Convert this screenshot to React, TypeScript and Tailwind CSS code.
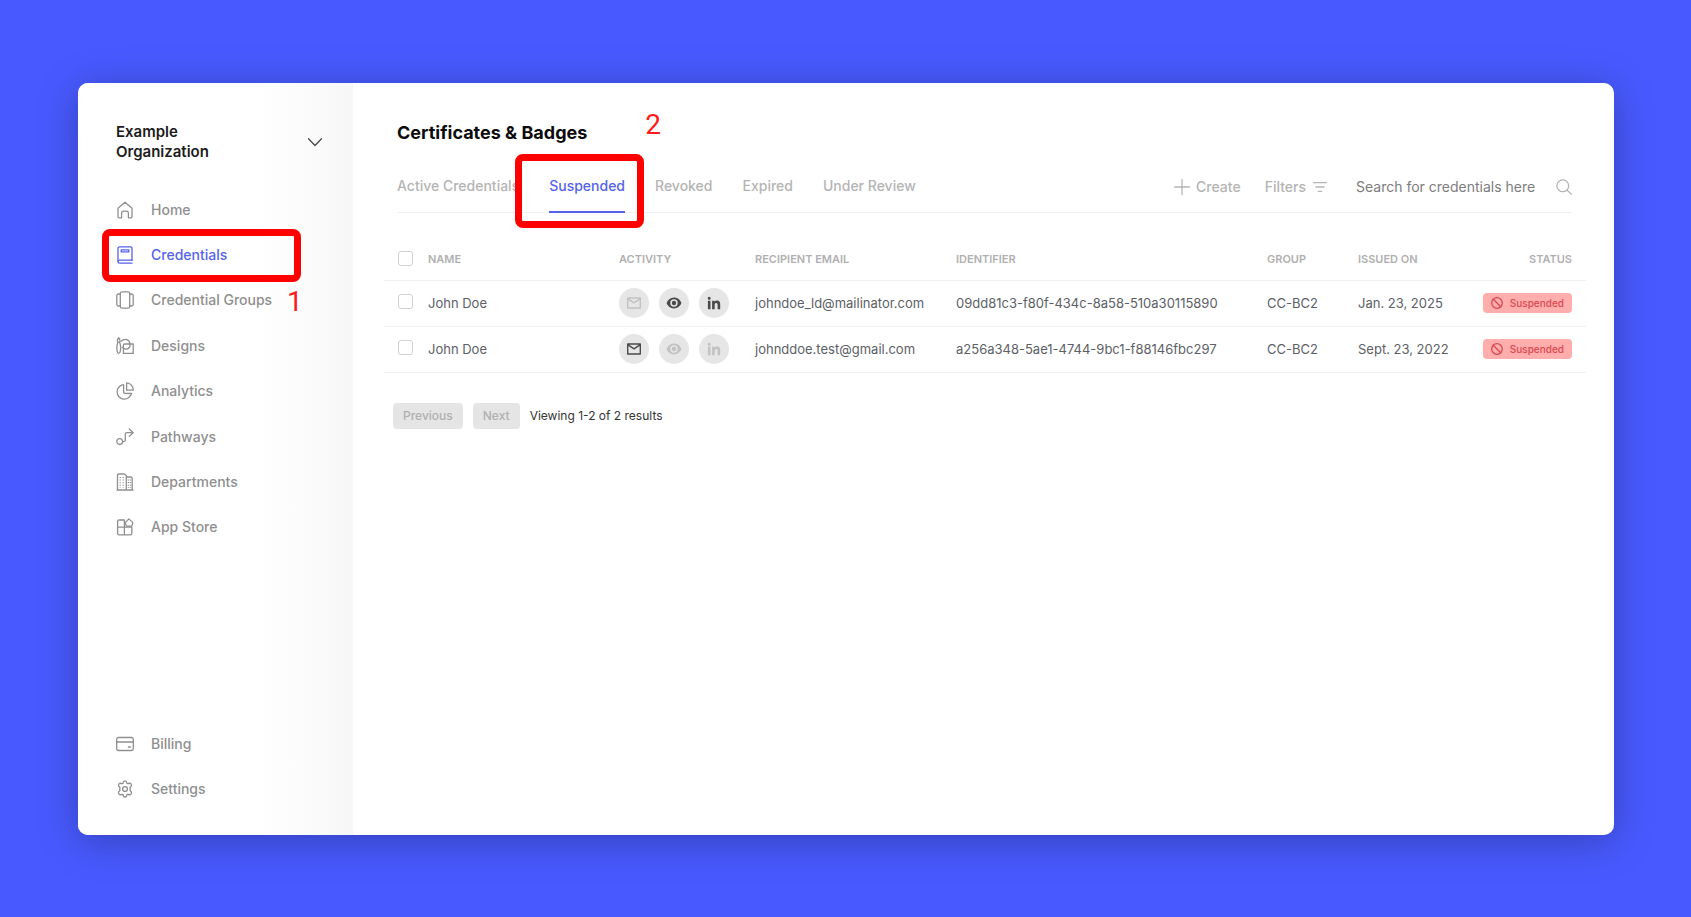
import React, { ReactNode, useState } from 'react';
import clsx from 'clsx';

function Svg({ className, children, box = 18 }: { className?: string; children: ReactNode; box?: number }) {
  return (
    <svg
      viewBox={`0 0 ${box} ${box}`}
      className={clsx('shrink-0', className)}
      fill="none"
      stroke="currentColor"
      strokeWidth="1.3"
      strokeLinecap="round"
      strokeLinejoin="round"
      aria-hidden="true"
    >
      {children}
    </svg>
  );
}

const HomeIcon = () => (
  <Svg className="size-[18px]">
    <path d="M2 7.2 9 1.2l7 6v8.6a1 1 0 0 1-1 1h-2.6v-4.6a2 2 0 0 0-2-2H7.6a2 2 0 0 0-2 2v4.6H3a1 1 0 0 1-1-1z" />
  </Svg>
);

const CredentialsIcon = () => (
  <Svg className="size-[18px]">
    <path d="M16 14.2V2A1.200 1.200 0 0 0 14.800.8H3.800A1.800 1.800 0 0 0 2 2.600v12.800a1.800 1.800 0 0 0 1.800 1.800H16" />
    <path d="M2 15.400a1.500 1.500 0 0 1 1.600-1.200H16" />
    <path d="M5.200 3.900h7.600v2H5.200z" />
  </Svg>
);

const GroupsIcon = () => (
  <Svg className="size-[18px]">
    <rect x="4.300" y=".8" width="9.400" height="16.400" rx="1.800" />
    <path d="M4.300 3H2.600A1.800 1.800 0 0 0 .8 4.800v8.400A1.800 1.800 0 0 0 2.600 15h1.700M13.700 3h1.700a1.800 1.800 0 0 1 1.800 1.800v8.400a1.800 1.800 0 0 1-1.800 1.800h-1.700" />
  </Svg>
);

const DesignsIcon = () => (
  <Svg className="size-[18px]">
    <path d="M2.700.8c1.300 1.300 1.600 2.800 1 4.600H1.800C1.100 3.600 1.400 2.100 2.700.8zM1.800 5.400c-1.200 3-1.200 5.600-.6 8.800.4 3 2.700 3 3.100 0 .6-3.200.5-5.800-.6-8.800" />
    <path d="M5.400 4.200A4.900 4.900 0 0 1 14 7M6.200 10.200a5 5 0 0 0 6.300 1.200A4.800 4.800 0 0 0 14 7" />
    <path d="M8.600 7h8.600v9.400H7.400V8.200A1.200 1.200 0 0 1 8.600 7z" />
  </Svg>
);

const AnalyticsIcon = () => (
  <Svg className="size-[18px]">
    <path d="M7.600 2.600a7.300 7.300 0 1 0 7.900 8.900l-6.700-.1a1.200 1.200 0 0 1-1.200-1.200z" />
    <path d="M10.600.8v7.400h6.600A7 7 0 0 0 10.600.8z" />
  </Svg>
);

const PathwaysIcon = () => (
  <Svg className="size-[18px]">
    <circle cx="3.700" cy="13.600" r="2.900" />
    <path d="M6.600 13.600h1.200a1.500 1.500 0 0 0 1.500-1.500V6.500A1.800 1.800 0 0 1 11.100 4.700h6M13.300 1l3.900 3.700-3.900 3.700" />
  </Svg>
);

const DepartmentsIcon = () => (
  <Svg className="size-[18px]">
    <path d="M1.500 17V2.200A1.200 1.200 0 0 1 2.700 1h5.600l2 1.500V17zM10.300 4h4.400a1.500 1.500 0 0 1 1.500 1.500V17h-5.900M1 17h16" />
    <path strokeDasharray="1 1.600" strokeLinecap="butt" d="M4.200 4v11M7.200 4v11M12.400 6.500V15M14.400 6.500V15" />
  </Svg>
);

const AppStoreIcon = () => (
  <Svg className="size-[18px]">
    <path d="M8.400 2H2.900A1.300 1.300 0 0 0 1.600 3.300v5.900h6.800zM1.600 9.200v6.300a1.300 1.300 0 0 0 1.300 1.300h5.500V9.200zM8.400 9.200h7.400v6.300a1.300 1.300 0 0 1-1.300 1.300H8.400z" />
    <path d="m12.900.9 3.900 3.700-1 3.600h-5.300L9.200 4.600z" />
  </Svg>
);

const BillingIcon = () => (
  <Svg className="size-[18px]">
    <rect x=".7" y="2.500" width="16.600" height="13" rx="1.800" />
    <path d="M.7 7h16.600M12.400 12h2" />
  </Svg>
);

const SettingsIcon = () => (
  <Svg className="size-[18px]" box={24}>
    <path
      strokeWidth="1.800"
      d="M9.600 3.900c.2-1.200.6-2.500 1.500-2.500h1.800c.9 0 1.300 1.300 1.500 2.500.1.600.8 1 1.500 1 1.400-.3 2.900-1 3.600-.2l1.200 2c.5.900-.7 2-1.600 2.900-.5.500-.5 1.200-.2 1.600.1.500.1 1.100 0 1.600-.3.400-.3 1.100.2 1.600.9.900 2.100 2 1.600 2.900l-1.200 2c-.7.800-2.200.1-3.600-.2-.7 0-1.400.4-1.500 1-.2 1.200-.6 2.500-1.500 2.500h-1.800c-.9 0-1.300-1.300-1.500-2.500-.1-.6-.8-1-1.500-1-1.400.3-2.900 1-3.600.2l-1.200-2c-.5-.9.7-2 1.600-2.900.5-.5.5-1.200.2-1.600-.1-.5-.1-1.100 0-1.600.3-.4.300-1.100-.2-1.600-.9-.9-2.100-2-1.600-2.900l1.200-2c.7-.8 2.200-.1 3.600.2.700 0 1.400-.4 1.500-1z"
    />
    <circle strokeWidth="1.800" cx="12" cy="12" r="3.200" />
  </Svg>
);

const MailIcon = () => (
  <Svg className="size-4" box={16}>
    <path strokeWidth="1.400" d="M1.700 3h12.600v10H1.700zM1.700 3.600 8 7.800l6.300-4.200" />
  </Svg>
);

const EyeIcon = () => (
  <Svg className="size-4" box={16}>
    <path
      fill="currentColor"
      stroke="none"
      fillRule="evenodd"
      d="M8 2.600c-3.400 0-6.200 2.200-7.400 5.400 1.200 3.200 4 5.400 7.400 5.400s6.200-2.200 7.400-5.400C14.200 4.800 11.400 2.600 8 2.600zm0 9.100a3.700 3.700 0 1 1 0-7.400 3.700 3.700 0 0 1 0 7.400zm0-1.500a2.200 2.200 0 1 0 0-4.400 2.200 2.200 0 0 0 0 4.400z"
    />
  </Svg>
);

const LinkedinIcon = () => (
  <Svg className="size-4" box={16}>
    <path
      fill="currentColor"
      stroke="none"
      d="M1.900 5.800h2.600v8.400H1.900zM3.200 1.800a1.500 1.500 0 1 1 0 3 1.500 1.500 0 0 1 0-3zM6.100 5.800h2.500V7c.4-.8 1.300-1.400 2.500-1.400 2.600 0 3.100 1.700 3.100 4v4.600h-2.600v-4.100c0-1 0-2.200-1.400-2.200s-1.500 1-1.500 2.100v4.200H6.100z"
    />
  </Svg>
);

const BanIcon = () => (
  <Svg className="size-3" box={12}>
    <circle cx="6" cy="6" r="5.300" />
    <path d="m2.300 2.300 7.400 7.400" />
  </Svg>
);

const NAV: { label: string; icon: () => ReactNode }[] = [
  { label: 'Home', icon: HomeIcon },
  { label: 'Credentials', icon: CredentialsIcon },
  { label: 'Credential Groups', icon: GroupsIcon },
  { label: 'Designs', icon: DesignsIcon },
  { label: 'Analytics', icon: AnalyticsIcon },
  { label: 'Pathways', icon: PathwaysIcon },
  { label: 'Departments', icon: DepartmentsIcon },
  { label: 'App Store', icon: AppStoreIcon },
];

const FOOTER_NAV = [
  { label: 'Billing', icon: BillingIcon },
  { label: 'Settings', icon: SettingsIcon },
];

const TABS = ['Active Credentials', 'Suspended', 'Revoked', 'Expired', 'Under Review'];

const ROWS = [
  {
    name: 'John Doe',
    mailed: false,
    viewed: true,
    shared: true,
    email: 'johndoe_ld@mailinator.com',
    identifier: '09dd81c3-f80f-434c-8a58-510a30115890',
    group: 'CC-BC2',
    issued: 'Jan. 23, 2025',
  },
  {
    name: 'John Doe',
    mailed: true,
    viewed: false,
    shared: false,
    email: 'johnddoe.test@gmail.com',
    identifier: 'a256a348-5ae1-4744-9bc1-f88146fbc297',
    group: 'CC-BC2',
    issued: 'Sept. 23, 2022',
  },
];

function NavItem({ label, icon: Icon, active }: { label: string; icon: () => ReactNode; active?: boolean }) {
  return (
    <li className="relative flex items-center">
      <a
        href="#"
        className={clsx('flex items-center gap-[17px] text-sm font-medium', active ? 'text-[#5463ea]' : 'text-[#8f8f8f]')}
      >
        <Icon />
        {label}
      </a>
      {active && (
        <>
          <span className="pointer-events-none absolute -left-[14px] -top-[3px] h-[53px] w-[199px] rounded-lg border-[7px] border-[#ff0000]" />
          <span className="absolute left-[171px] top-[54px] font-['Roboto',sans-serif] text-[28px] leading-8 text-[#ff1a1a]">1</span>
        </>
      )}
    </li>
  );
}

function Activity({ label, on, children }: { label: string; on: boolean; children: ReactNode }) {
  return (
    <button
      aria-label={label}
      className={clsx('flex size-[30px] items-center justify-center rounded-full bg-[#e6e6e6]', on ? 'text-[#4a4a4a]' : 'text-[#c2c2c2]')}
    >
      {children}
    </button>
  );
}

function Checkbox({ label, checked, onChange }: { label: string; checked: boolean; onChange: () => void }) {
  return (
    <input
      type="checkbox"
      aria-label={label}
      checked={checked}
      onChange={onChange}
      className="block size-[15px] appearance-none rounded-[3px] border border-[#cfd0d6] bg-white checked:bg-[#5463ea]"
    />
  );
}

export default function App() {
  const [tab, setTab] = useState('Suspended');
  const [selected, setSelected] = useState<number[]>([]);

  const toggle = (i: number) =>
    setSelected(selected.includes(i) ? selected.filter((s) => s !== i) : [...selected, i]);
  const allSelected = selected.length === ROWS.length;

  return (
    <div className="flex min-h-screen bg-[#485aff] pt-[83px] pr-[77px] pb-[82px] pl-[78px] font-['Inter',sans-serif]">
      <div className="flex flex-1 overflow-hidden rounded-[10px] bg-white shadow-[0_6px_40px_rgba(0,0,0,0.28)]">
        <aside className="flex w-[275px] shrink-0 flex-col bg-linear-to-r from-white from-65% to-[#f7f7f7] pt-[39px] pr-[30px] pb-6 pl-[38px]">
          <button className="flex items-center justify-between text-left text-[15px] leading-5 font-semibold text-[#1c1c1c]">
            <span className="w-28">Example Organization</span>
            <Svg className="size-4 text-[#4a4a4a]" box={16}>
              <path d="m1.500 4.800 6.500 6.700 6.500-6.700" />
            </Svg>
          </button>
          <nav className="mt-[25px] flex flex-1 flex-col justify-between">
            <ul className="grid h-[363px] auto-rows-fr">
              {NAV.map((item) => (
                <NavItem key={item.label} {...item} active={item.label === 'Credentials'} />
              ))}
            </ul>
            <ul className="grid h-[90px] auto-rows-fr">
              {FOOTER_NAV.map((item) => (
                <NavItem key={item.label} {...item} />
              ))}
            </ul>
          </nav>
        </aside>

        <main className="min-w-0 flex-1 pt-[38px] pr-7 pl-[31px]">
          <h1 className="pl-[13px] text-lg leading-6 font-bold text-[#0c0c0c]">Certificates &amp; Badges</h1>

          <div className="mr-3.5 ml-[13px] flex h-[68px] items-end justify-between border-b border-[#f0f1f2]">
            <div role="tablist" className="flex gap-[30px]">
              {TABS.map((t) => (
                <div key={t} className="relative -mb-px">
                  <button
                    role="tab"
                    aria-selected={t === tab}
                    onClick={() => setTab(t)}
                    className={clsx(
                      'border-b-2 pb-[15px] text-sm leading-5 font-medium',
                      t === tab ? 'border-[#5463ea] text-[#5463ea]' : 'border-transparent text-[#b4b4b4]'
                    )}
                  >
                    {t}
                  </button>
                  {t === 'Suspended' && (
                    <>
                      <span className="pointer-events-none absolute -top-[19px] -left-[34px] h-[74px] w-[129px] rounded-lg border-[7px] border-[#ff0000]" />
                      <span className="absolute -top-[64px] left-[96px] font-['Roboto',sans-serif] text-[28px] leading-8 text-[#ff1a1a]">2</span>
                    </>
                  )}
                </div>
              ))}
            </div>

            <div className="flex items-center pb-[15px] text-sm leading-5 font-medium text-[#b4b4b4]">
              <button className="flex items-center gap-1.5">
                <Svg className="size-4" box={16}>
                  <path d="M8 .6v14.800M.6 8h14.800" />
                </Svg>
                Create
              </button>
              <button className="ml-6 flex items-center gap-1.5">
                Filters
                <Svg className="size-4" box={16}>
                  <path d="M1.400 3.600h13.200M4 8h8M6.400 12.400h3.200" />
                </Svg>
              </button>
              <label className="ml-7 flex items-center">
                <input
                  type="text"
                  aria-label="Search for credentials"
                  placeholder="Search for credentials here"
                  className="w-[200px] font-normal text-[#333] outline-none placeholder:text-[#7d7d7d]"
                />
                <Svg className="size-4" box={16}>
                  <circle cx="6.800" cy="6.800" r="5.900" />
                  <path d="m11.200 11.200 4.200 4.200" />
                </Svg>
              </label>
            </div>
          </div>

          <table className="mt-[25px] w-full table-fixed text-left text-[13px] leading-5 text-[#5c6066]">
            <thead className="text-[11px] text-[#b0b0b0]">
              <tr className="h-[42px] border-b border-[#f0f1f2]">
                <th className="w-11 pl-[14px]">
                  <Checkbox
                    label="Select all"
                    checked={allSelected}
                    onChange={() => setSelected(allSelected ? [] : ROWS.map((_, i) => i))}
                  />
                </th>
                <th className="w-[191px] font-semibold">NAME</th>
                <th className="w-[136px] font-semibold">ACTIVITY</th>
                <th className="w-[201px] font-semibold">RECIPIENT EMAIL</th>
                <th className="font-semibold">IDENTIFIER</th>
                <th className="w-[91px] font-semibold">GROUP</th>
                <th className="w-[118px] font-semibold">ISSUED ON</th>
                <th className="w-[110px] pr-3.5 text-right font-semibold">STATUS</th>
              </tr>
            </thead>
            <tbody>
              {ROWS.map((row, i) => (
                <tr key={row.identifier} className="h-[46px] border-b border-[#f0f1f2]">
                  <td className="pb-[3px] pl-[14px]">
                    <Checkbox label={`Select ${row.name}`} checked={selected.includes(i)} onChange={() => toggle(i)} />
                  </td>
                  <td>{row.name}</td>
                  <td>
                    <div className="flex gap-2.5">
                      <Activity label="Email" on={row.mailed}>
                        <MailIcon />
                      </Activity>
                      <Activity label="Views" on={row.viewed}>
                        <EyeIcon />
                      </Activity>
                      <Activity label="LinkedIn" on={row.shared}>
                        <LinkedinIcon />
                      </Activity>
                    </div>
                  </td>
                  <td>{row.email}</td>
                  <td>{row.identifier}</td>
                  <td>{row.group}</td>
                  <td>{row.issued}</td>
                  <td className="pr-3.5">
                    <span className="ml-auto flex h-5 w-fit items-center gap-[7px] rounded bg-[#ffadad] px-2 text-[10px] font-medium text-[#d9484f]">
                      <BanIcon />
                      Suspended
                    </span>
                  </td>
                </tr>
              ))}
            </tbody>
          </table>

          <div className="mt-[30px] flex items-center gap-2.5 pl-[9px] text-xs text-[#333]">
            <button disabled className="h-[26px] rounded bg-[#e5e5e5] px-2.5 font-medium text-[#b0b0b0]">
              Previous
            </button>
            <button disabled className="h-[26px] rounded bg-[#e5e5e5] px-2.5 font-medium text-[#b0b0b0]">
              Next
            </button>
            <span>Viewing 1-2 of 2 results</span>
          </div>
        </main>
      </div>
    </div>
  );
}
